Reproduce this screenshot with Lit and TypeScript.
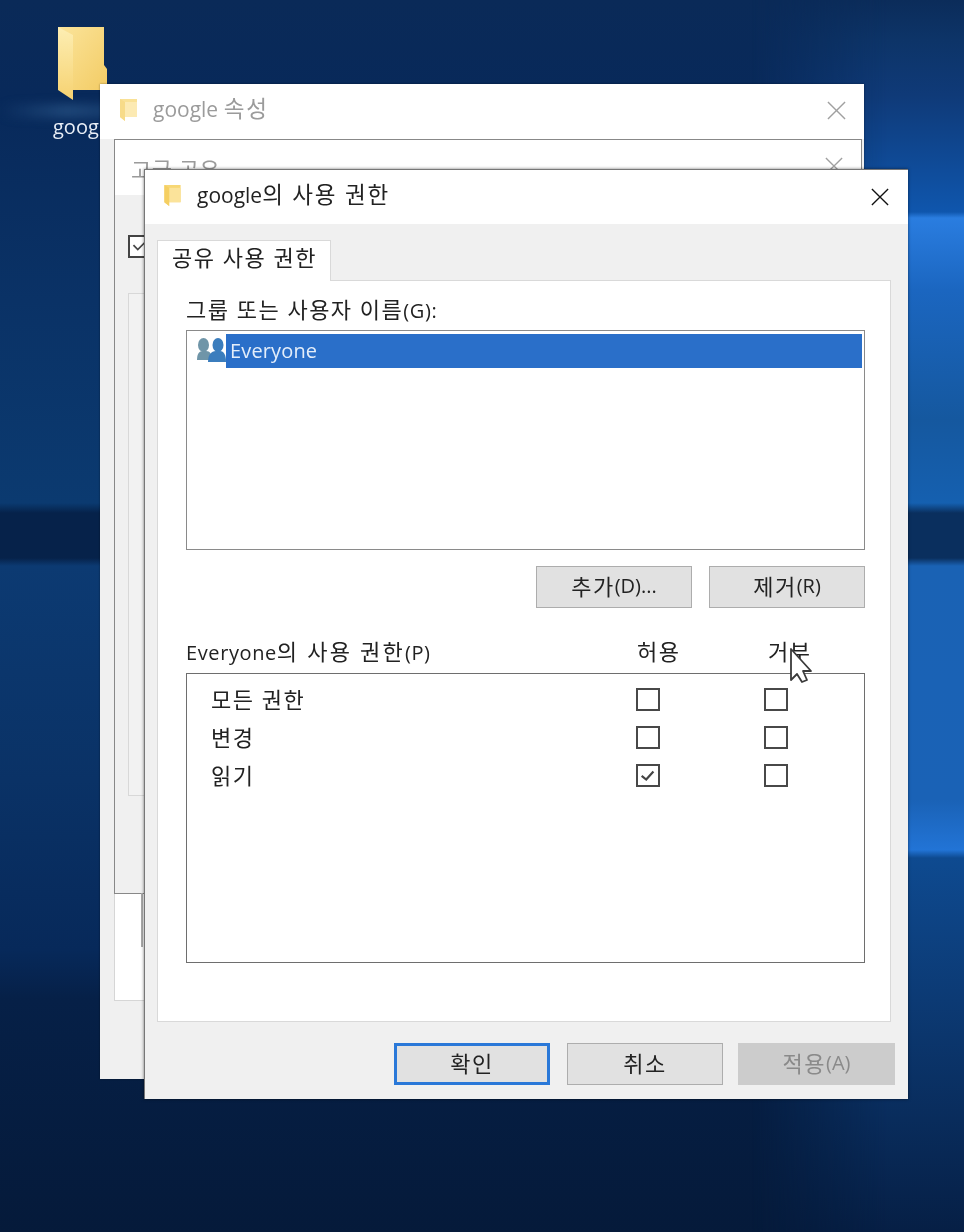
import { LitElement, html, css, svg } from "lit";
import { customElement } from "lit/decorators.js";

const closeIcon = () => html`<svg class="x" viewBox="0 0 20 20"><path d="M1 1L19 19M19 1L1 19" stroke="currentColor" stroke-width="1.5" fill="none"/></svg>`;

const smallFolder = (cls: string) => html`<svg class="sf ${cls}" viewBox="0 0 17 22">
  <path d="M0 0H17V18H5V22L0 18Z" fill="#f7d774"/>
  <path d="M5 3H17V18H5Z" fill="#fbe39a"/>
  <path d="M0 0L5 3V22L0 18Z" fill="#f5cf62"/>
</svg>`;

const check = (on = false) => html`<span class="cb">${on
  ? svg`<svg viewBox="0 0 22 21"><path d="M4 11L9 15L17 6" fill="none" stroke="#444" stroke-width="2.4"/></svg>`
  : ""}</span>`;

const k = (t: string) => html`<span class="k">${t}</span>`;

@customElement("app-root")
export class AppRoot extends LitElement {
  static styles = css`
    :host { display: block; width: 964px; height: 1232px; }
    * { box-sizing: border-box; }
    .desk {
      position: relative; width: 964px; height: 1232px; overflow: hidden;
      font-family: "Open Sans", "Noto Sans CJK KR", sans-serif; font-size: 20px; color: #222;
      background: linear-gradient(180deg, #0a2a58 0, #08295a 95px, #0a3266 300px, #0b3a70 503px, #06224a 513px, #06224a 558px, #0c3a72 566px, #0a3266 780px, #07295a 950px, #062047 1000px, #051a3a 1232px);
      filter: blur(.45px);
    }
    .bright {
      position: absolute; inset: 0;
      background: linear-gradient(180deg, #0b2c5a 0, #0d3468 40px, #0f3a78 95px, #0f56ad 212px, #2a7de0 218px, #1b66c0 290px, #15589f 420px, #1560b0 503px, #0a2f5e 513px, #0a2f5e 558px, #1a62b4 566px, #1a62b6 800px, #2274d6 850px, #0e4a90 858px, #0c3a74 1000px, #061f45 1232px);
      -webkit-mask-image: linear-gradient(90deg, transparent 78%, #000 92%);
      mask-image: linear-gradient(90deg, transparent 78%, #000 92%);
    }
    .streak { position: absolute; left: 0; top: 104px; width: 110px; height: 14px; background: linear-gradient(90deg, #0f3a6e00, #2a5688aa 60%, #2a568866); filter: blur(5px); }
    .icon { position: absolute; left: 50px; top: 24px; width: 60px; height: 82px; display: block; }
    .iconlabel { position: absolute; left: 53px; top: 113px; color: #e8eef6; font-size: 20px; line-height: 28px; }

    .k { font-size: 22px; letter-spacing: 1.5px; }
    .win { position: absolute; background: #f0f0f0; box-shadow: 0 0 2px #0006; }
    .title { display: flex; align-items: center; background: #fff; font-size: 21px; }
    .title > span { padding-bottom: 4px; }
    .title .k { font-size: 22.5px; letter-spacing: 1.8px; }
    .x { display: block; margin-left: auto; }
    .sf { display: block; flex: none; }
    .faded { opacity: .75; }

    .win1 { left: 100px; top: 84px; width: 764px; height: 995px; padding: 0 0 78px 14px; display: flex; flex-direction: column; }
    .win1 .title { height: 55px; margin-left: -14px; padding: 0 18px 4px 20px; color: #9b9b9b; }
    .win1 .title .sf { width: 17px; height: 22px; margin-right: 16px; }
    .win1 .x { width: 19px; height: 19px; color: #a0a0a0; margin-top: 2px; }
    .win1panel { flex: 1; background: #fff; border: 1px solid #d6d6d6; margin-right: 2px; }

    .win2 { left: 114px; top: 139px; width: 748px; height: 755px; border: 1px solid #888; padding: 0 0 0 13px; box-shadow: none; }
    .win2 .title { height: 55px; margin-left: -13px; padding: 0 18px 4px 16px; color: #9b9b9b; align-items: center; }
    .win2 .title > span { padding: 4px 0 0; }
    .win2 .title .k { font-size: 22px; letter-spacing: .5px; }
    .win2 .x { width: 18px; height: 18px; color: #a0a0a0; }
    .win2 .chk { display: block; width: 23px; height: 23px; margin-top: 40px; border: 2px solid #444; background: #fff; }
    .win2 .chk svg { display: block; width: 100%; height: 100%; }
    .group { margin-top: 35px; height: 503px; border: 1px solid #d8d8d8; background: #f2f2f2; }
    .stub { position: absolute; left: 141px; top: 893px; width: 2px; height: 54px; background: #aaa; }

    .win3 { left: 144px; top: 169px; width: 764px; height: 930px; border: 1px solid #777; border-width: 1px 0 0 1px; box-shadow: 0 0 3px #0008; display: flex; flex-direction: column; }
    .win3 .title { height: 54px; padding: 0 19px 4px 19px; }
    .win3 .title .sf { width: 17px; height: 21px; margin-right: 16px; }
    .win3 .x { width: 18px; height: 18px; color: #111; margin-top: 4px; }
    .tabs { height: 56px; padding: 16px 0 0 12px; display: flex; }
    .tab { width: 174px; height: 41px; background: #fff; border: 1px solid #d9d9d9; border-bottom: none; padding-left: 14px; line-height: 33px; margin-bottom: -1px; position: relative; z-index: 1; }
    .panel { width: 734px; height: 742px; margin-left: 12px; background: #fff; border: 1px solid #d9d9d9; padding: 14px 25px 0 28px; }
    .lbl { line-height: 28px; letter-spacing: .6px; }
    .list { margin-top: 5px; height: 220px; border: 1px solid #8a8a8a; padding: 3px 2px 0 10px; }
    .row { display: flex; height: 34px; }
    .people { width: 29px; height: 26px; flex: none; margin-top: 3px; display: block; }
    .sel { flex: 1; background: #2a6fc9; color: #e4eefa; padding-left: 4px; line-height: 34px; letter-spacing: .15px; }
    .btns { display: flex; gap: 17px; justify-content: flex-end; }
    .btn { width: 156px; height: 42px; background: #e1e1e1; border: 1px solid #adadad; display: flex; align-items: center; justify-content: center; padding-bottom: 4px; }
    .mid { margin-top: 16px; }
    .phead { display: grid; grid-template-columns: 438px 128px 1fr; margin-top: 27px; line-height: 32px; height: 34px; }
    .phead > span:first-child { letter-spacing: .6px; }
    .phead > span:first-child .k { letter-spacing: 2.2px; }
    .phead > span:nth-child(2) { padding-left: 13px; }
    .phead > span:nth-child(3) { padding-left: 16px; }
    .perms { margin-top: 4px; height: 290px; border: 1px solid #6e6e6e; padding: 6px 0 0 24px; }
    .prow { display: grid; grid-template-columns: 425px 128px 1fr; height: 38px; align-items: center; }
    .prow > span:first-child { padding-bottom: 3px; }
    .cb { width: 24px; height: 23px; border: 2px solid #484848; display: block; background: #fff; }
    .cb svg { display: block; width: 100%; height: 100%; }
    .foot { flex: 1; display: flex; justify-content: flex-end; align-items: flex-start; gap: 17px; padding: 21px 13px 0 0; }
    .foot .btn { width: 156px; }
    .foot .btn.last { margin-left: -2px; width: 157px; background: #cccccc; border-color: #cccccc; color: #8a8a8a; }
    .foot .btn.def { border: 3px solid #2a78d8; }
    .cursor { position: absolute; left: 789px; top: 647px; width: 23px; height: 36px; display: block; }
  `;

  render() {
    return html`<div class="desk">
      <div class="bright"></div>
      <div class="streak"></div>
      <svg class="icon" viewBox="0 0 60 82">
        <defs>
          <linearGradient id="fb" x1="0" x2="1" y1="0" y2="1"><stop offset="0" stop-color="#fbe49b"/><stop offset="1" stop-color="#f3cc65"/></linearGradient>
          <linearGradient id="ff" x1="0" x2="0" y1="0" y2="1"><stop offset="0" stop-color="#fdeeb3"/><stop offset="1" stop-color="#f6d271"/></linearGradient>
        </defs>
        <path d="M8 3H54V41L57 45V66H23V60H8Z" fill="url(#fb)"/>
        <path d="M8 3L23 11V76L8 66Z" fill="url(#ff)"/>
      </svg>
      <div class="iconlabel">google</div>

      <div class="win win1">
        <div class="title">${smallFolder("faded")}<span>google ${k("속성")}</span>${closeIcon()}</div>
        <div class="win1panel"></div>
      </div>
      <div class="win win2">
        <div class="title"><span>${k("고급 공유")}</span>${closeIcon()}</div>
        <div class="chk"><svg viewBox="0 0 22 21"><path d="M4 9L9 14L18 5" fill="none" stroke="#444" stroke-width="2"/></svg></div>
        <div class="group"></div>
      </div>
      <div class="stub"></div>

      <div class="win win3">
        <div class="title">${smallFolder("")}<span>google${k("의 사용 권한")}</span>${closeIcon()}</div>
        <div class="tabs"><div class="tab">${k("공유 사용 권한")}</div></div>
        <div class="panel">
          <div class="lbl">${k("그룹 또는 사용자 이름")}(G):</div>
          <div class="list">
            <div class="row">
              <svg class="people" viewBox="0 0 29 26">
                <g fill="#6f95a8"><ellipse cx="6.5" cy="8" rx="5.5" ry="7"/><path d="M0 23C0 17 2 14 6 14H9C13 14 15 17 15 23Z"/></g>
                <g fill="#3b7dbd"><ellipse cx="21" cy="8" rx="5.5" ry="7"/><path d="M11 25C11 18 14 14 19 14H23C27 14 29 18 29 25Z"/></g>
              </svg>
              <div class="sel">Everyone</div>
            </div>
          </div>
          <div class="btns mid"><div class="btn">${k("추가")}(D)...</div><div class="btn">${k("제거")}(R)</div></div>
          <div class="phead"><span>Everyone${k("의 사용 권한")}(P)</span><span>${k("허용")}</span><span>${k("거부")}</span></div>
          <div class="perms">
            <div class="prow"><span>${k("모든 권한")}</span>${check()}${check()}</div>
            <div class="prow"><span>${k("변경")}</span>${check()}${check()}</div>
            <div class="prow"><span>${k("읽기")}</span>${check(true)}${check()}</div>
          </div>
        </div>
        <div class="foot">
          <div class="btn def">${k("확인")}</div>
          <div class="btn">${k("취소")}</div>
          <div class="btn last">${k("적용")}(A)</div>
        </div>
      </div>

      <svg class="cursor" viewBox="0 0 23 36">
        <path d="M2 2V33L8 27L13 35L18 33L14 24H22Z" fill="#fff" stroke="#3a3a3a" stroke-width="1.8" stroke-linejoin="round"/>
      </svg>
    </div>`;
  }
}
